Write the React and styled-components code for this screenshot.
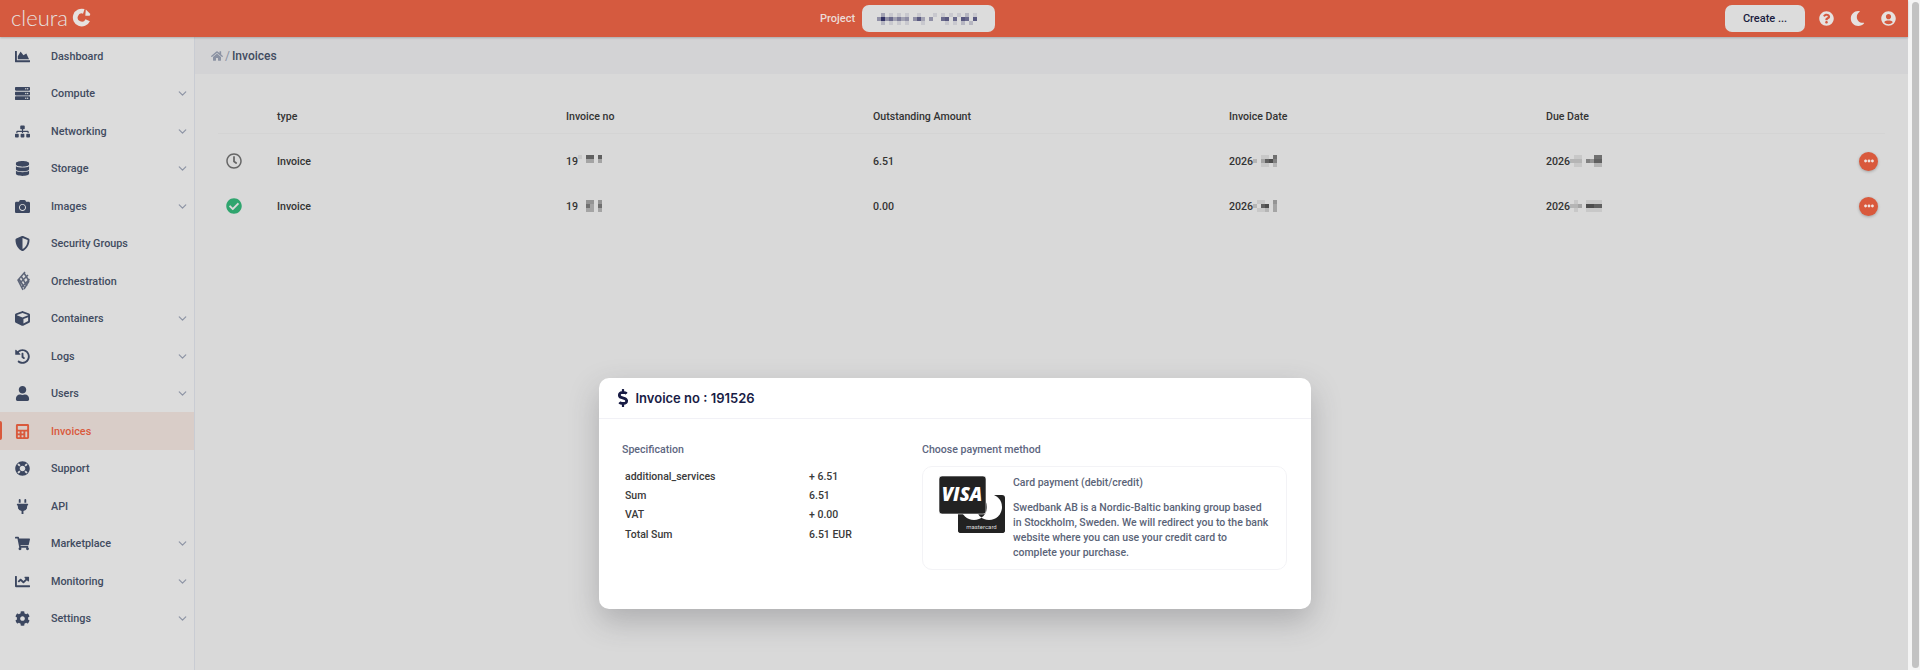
import styled, { createGlobalStyle } from 'styled-components';
import {
  FaChartArea, FaServer, FaSitemap, FaDatabase, FaCamera, FaShieldAlt, FaCube, FaHistory, FaUser,
  FaCalculator, FaLifeRing, FaPlug, FaShoppingCart, FaChartLine, FaCog, FaHome, FaQuestionCircle,
  FaMoon, FaUserCircle, FaRegClock, FaCheckCircle, FaEllipsisH, FaDollarSign,
} from 'react-icons/fa';
import { ChevronDown } from 'lucide-react';

const GlobalStyle = createGlobalStyle`
  html, body {
    margin: 0;
    height: 100%;
    overflow: hidden;
    background: #d9d9d9;
    font-family: Roboto, "Liberation Sans", sans-serif;
    -webkit-font-smoothing: antialiased;
  }
`;

const Page = styled.div`
  display: flex;
  height: 670px;
  width: 1920px;
  position: relative;
  overflow: hidden;
`;

const Content = styled.div`
  flex: 1;
  min-width: 0;
  display: flex;
  flex-direction: column;
`;

const ScrollTrack = styled.div`
  width: 12px;
  background: #f4f4f4;
  padding: 2px 1px 2px 4px;
  box-sizing: border-box;
`;

const ScrollThumb = styled.div`
  height: 100%;
  background: #c2c2c2;
  border-radius: 4px;
`;

const Header = styled.header`
  height: 37px;
  flex: none;
  background: #d55a3f;
  box-shadow: 0 1px 2px rgba(0, 0, 0, 0.2);
  display: grid;
  grid-template-columns: 809px auto 1fr;
  align-items: center;
  padding: 0 4px 0 11px;
  position: relative;
  z-index: 1;
`;

const Brand = styled.div`
  display: flex;
  align-items: center;
  gap: 4px;
  color: #e6e2e0;
  font-family: Lato, Roboto, sans-serif;
  font-weight: 300;
  font-size: 22px;
  margin-top: -2px;
`;

const ProjectBox = styled.div`
  display: flex;
  align-items: center;
  gap: 7px;
  color: #ecdcd7;
  font-size: 11px;
  font-weight: 500;
`;

const GreyPill = styled.div`
  height: 27px;
  border-radius: 7px;
  background: #dcdcdc;
  display: flex;
  align-items: center;
  justify-content: center;
`;

const ProjectPill = styled(GreyPill)`
  width: 133px;
`;

const HeaderRight = styled.div`
  display: flex;
  align-items: center;
  justify-content: flex-end;
  color: #e6e2e0;
`;

const CreateButton = styled(GreyPill)`
  width: 80px;
  color: #1a1c40;
  font-size: 11px;
  font-weight: 500;
  margin-right: 6px;
`;

const HeaderIcon = styled.span`
  width: 31px;
  display: flex;
  justify-content: center;
  font-size: 15px;
`;

const Body = styled.div`
  flex: 1;
  display: flex;
  min-height: 0;
`;

const Sidebar = styled.nav`
  width: 194px;
  flex: none;
  background: #dcdcdc;
  border-right: 1px solid #c9ccd3;
`;

const NavRow = styled.div`
  height: 37.5px;
  box-sizing: border-box;
  padding-top: 1px;
  display: flex;
  align-items: center;
  position: relative;
  font-size: 10.8px;
  font-weight: 500;
  color: ${(p) => (p.$active ? '#d9593c' : '#414b60')};
  background: ${(p) => (p.$active ? '#d9cdc8' : 'transparent')};

  &::before {
    content: '';
    display: ${(p) => (p.$active ? 'block' : 'none')};
    position: absolute;
    left: 0;
    top: 9px;
    width: 2px;
    height: 19px;
    border-radius: 0 2px 2px 0;
    background: #d9593c;
  }
`;

const NavIcon = styled.span`
  width: 45px;
  margin-right: 6px;
  flex: none;
  display: flex;
  justify-content: center;
  font-size: 15px;
  color: ${(p) => (p.$active ? '#d9593c' : '#3c4760')};
`;

const NavLabel = styled.span`
  flex: 1;
`;

const NavChevron = styled(ChevronDown)`
  width: 13px;
  height: 13px;
  margin-right: 5px;
  color: #8d94a5;
`;

const Main = styled.main`
  flex: 1;
  min-width: 0;
  background: #d9d9d9;
`;

const Breadcrumb = styled.div`
  height: 37px;
  background: #d3d3d5;
  display: flex;
  align-items: center;
  padding-left: 16px;
  color: #8b92a3;
  font-size: 12px;
  gap: 2px;
`;

const CrumbCurrent = styled.span`
  color: #414b60;
  font-weight: 500;
`;

const TableWrap = styled.div`
  padding: 24px 23px 0;
`;

const Row = styled.div`
  display: grid;
  grid-template-columns: 59px 289px 307px 356px 317px 1fr;
  align-items: center;
  height: ${(p) => (p.$head ? '36px' : '45px')};
  padding-top: ${(p) => (p.$head ? '2px' : '0')};
  font-size: 10.6px;
  font-weight: 500;
  color: #333;
  border-bottom: ${(p) => (p.$head ? '1px solid #d4d4d4' : 'none')};
  box-sizing: border-box;
  margin-bottom: ${(p) => (p.$head ? '4.5px' : '0')};
`;

const StatusCell = styled.span`
  display: flex;
  justify-content: center;
  width: 32px;
  font-size: 16px;
  color: ${(p) => (p.$paid ? '#2fa56e' : '#666')};
`;

const MaskedCell = styled.span`
  display: flex;
  align-items: center;
`;

const LastCell = styled.span`
  display: flex;
  align-items: center;
  justify-content: space-between;
`;

const DotsButton = styled.span`
  width: 19px;
  height: 19px;
  border-radius: 50%;
  background: #d9593c;
  color: #f1e4e0;
  font-size: 10px;
  display: flex;
  align-items: center;
  justify-content: center;
  box-shadow: 0 1px 3px rgba(0, 0, 0, 0.25);
  margin-right: 7px;
`;

const Modal = styled.section`
  position: absolute;
  left: 599px;
  top: 378px;
  width: 712px;
  height: 231px;
  background: #fff;
  border-radius: 10px;
  box-shadow: 0 12px 30px rgba(60, 60, 70, 0.28);
  overflow: hidden;
`;

const ModalHead = styled.div`
  height: 41px;
  box-sizing: border-box;
  border-bottom: 1px solid #f1f1f6;
  display: flex;
  align-items: center;
  gap: 3.5px;
  padding-left: 15px;
  color: #191c45;
  font-family: Inter, Roboto, sans-serif;
  font-size: 13px;
  font-weight: 600;
`;

const ModalBody = styled.div`
  display: grid;
  grid-template-columns: 300px 365px;
  padding: 24px 0 0 23px;
`;

const SectionTitle = styled.div`
  font-size: 10.6px;
  font-weight: 500;
  color: #5d667f;
  line-height: 14px;
  margin-bottom: 9px;
`;

const SpecRow = styled.div`
  display: grid;
  grid-template-columns: 184px 1fr;
  padding: 1px 0 0 3px;
  box-sizing: border-box;
  height: 19.3px;
  align-items: center;
  font-size: 10.5px;
  font-weight: 500;
  color: #3a3a3a;
`;

const PayCard = styled.div`
  height: 104px;
  box-sizing: border-box;
  border: 1px solid #f3f3f6;
  border-radius: 10px;
  display: flex;
  padding: 8px 0 0 16px;
  gap: 8px;
`;

const LogoSlot = styled.div`
  padding-top: 1px;
`;

const PayText = styled.div`
  font-size: 10.5px;
  font-weight: 500;
  color: #5b6478;
  line-height: 15px;
  width: 256px;
`;

const PayTitle = styled.div`
  margin-bottom: 10px;
`;

const NAV = [
  { label: 'Dashboard', Icon: FaChartArea },
  { label: 'Compute', Icon: FaServer, more: true },
  { label: 'Networking', Icon: FaSitemap, more: true },
  { label: 'Storage', Icon: FaDatabase, more: true },
  { label: 'Images', Icon: FaCamera, more: true },
  { label: 'Security Groups', Icon: FaShieldAlt },
  { label: 'Orchestration', Icon: OrchestrationIcon },
  { label: 'Containers', Icon: FaCube, more: true },
  { label: 'Logs', Icon: FaHistory, more: true },
  { label: 'Users', Icon: FaUser, more: true },
  { label: 'Invoices', Icon: FaCalculator, active: true },
  { label: 'Support', Icon: FaLifeRing },
  { label: 'API', Icon: FaPlug },
  { label: 'Marketplace', Icon: FaShoppingCart, more: true },
  { label: 'Monitoring', Icon: FaChartLine, more: true },
  { label: 'Settings', Icon: FaCog, more: true },
];

const SPEC = [
  ['additional_services', '+ 6.51'],
  ['Sum', '6.51'],
  ['VAT', '+ 0.00'],
  ['Total Sum', '6.51 EUR'],
];

// blanked out parts of the screenshot, one digit per cell, 0 = no paint
function Mosaic({ rows, cell = 4, tone = '60,60,60' }) {
  return (
    <svg width={rows[0].length * cell} height={rows.length * cell} shapeRendering="crispEdges">
      {rows.map((r, y) =>
        r.split('').map((d, x) =>
          d === '0' ? null : (
            <rect key={x + '-' + y} x={x * cell} y={y * cell} width={cell} height={cell} fill={`rgba(${tone},${Number(d) / 9})`} />
          )
        )
      )}
    </svg>
  );
}

function OrchestrationIcon() {
  return (
    <svg width="14" height="20" viewBox="0 0 14 20" fill="none" stroke="#5d6578" strokeWidth="1.5">
      <path d="M9 1 2 9l5 10M12 4 4 12M13.500 8 6 16M13 10l-5 8M8 2l5 8M5 5l6 10M3 8l5 8" />
    </svg>
  );
}

function CleuraMark() {
  return (
    <svg width="19" height="19" viewBox="0 0 19 19" fill="none">
      <path d="M11.800 3.400A6.500 6.500 0 1 0 15.700 12.200" stroke="#e6e2e0" strokeWidth="4.800" />
      <path d="M13.800 1.600 18.300 6l-.6 1.800h-4.400z" fill="#e6e2e0" />
    </svg>
  );
}

function CardLogos() {
  return (
    <svg width="66" height="58" viewBox="0 0 66 58">
      <rect x="19" y="19" width="47" height="38" rx="3" fill="#222" />
      <circle cx="35" cy="31" r="13" fill="#fff" />
      <circle cx="50" cy="31" r="13" fill="#fff" />
      <path d="M42.500 20.400a13 13 0 0 1 0 21.200a13 13 0 0 1 0-21.200" fill="#222" />
      <rect x="19" y="44" width="47" height="13" rx="3" fill="#222" />
      <text x="42.500" y="53" textAnchor="middle" fontFamily="Roboto, sans-serif" fontSize="6" fill="#ddd">mastercard</text>
      <rect x="0" y="0" width="47" height="38" rx="3" fill="#222" />
      <rect x="0" y="0" width="47" height="38" rx="3" fill="none" stroke="#fff" strokeWidth="0.6" />
      <text x="23" y="25" textAnchor="middle" fontFamily="'Open Sans', Roboto, sans-serif" fontStyle="italic" fontWeight="800" fontSize="18.500" fill="#fff">VISA</text>
    </svg>
  );
}

const App = () => {
  return (
    <Page>
      <GlobalStyle />
      <Content>
        <Header>
          <Brand>
            cleura
            <CleuraMark />
          </Brand>
          <ProjectBox>
            Project
            <ProjectPill>
              <Mosaic
                cell={4}
                tone="50,50,100"
                rows={[
                  '03010101001000101010102010',
                  '49463534047304006706076070',
                  '02010101000100000101020200',
                ]}
              />
            </ProjectPill>
          </ProjectBox>
          <HeaderRight>
            <CreateButton>Create ...</CreateButton>
            <HeaderIcon><FaQuestionCircle /></HeaderIcon>
            <HeaderIcon><FaMoon /></HeaderIcon>
            <HeaderIcon><FaUserCircle /></HeaderIcon>
          </HeaderRight>
        </Header>
        <Body>
          <Sidebar>
            {NAV.map(({ label, Icon, more, active }) => (
              <NavRow key={label} $active={active}>
                <NavIcon $active={active}><Icon /></NavIcon>
                <NavLabel>{label}</NavLabel>
                {more && <NavChevron strokeWidth={2.2} />}
              </NavRow>
            ))}
          </Sidebar>
          <Main>
            <Breadcrumb>
              <FaHome /> / <CrumbCurrent>Invoices</CrumbCurrent>
            </Breadcrumb>
            <TableWrap>
              <Row $head>
                <span />
                <span>type</span>
                <span>Invoice no</span>
                <span>Outstanding Amount</span>
                <span>Invoice Date</span>
                <span>Due Date</span>
              </Row>
              <Row>
                <StatusCell><FaRegClock /></StatusCell>
                <span>Invoice</span>
                <MaskedCell>19<Mosaic cell={4} rows={['1077070', '0033030', '0000000']} /></MaskedCell>
                <span>6.51</span>
                <MaskedCell>2026<Mosaic cell={4} rows={['001106', '203785', '001102']} /></MaskedCell>
                <LastCell>
                  <MaskedCell>2026<Mosaic cell={4} rows={['01100066', '22205477', '01100022']} /></MaskedCell>
                  <DotsButton><FaEllipsisH /></DotsButton>
                </LastCell>
              </Row>
              <Row>
                <StatusCell $paid><FaCheckCircle /></StatusCell>
                <span>Invoice</span>
                <MaskedCell>19<Mosaic cell={4} rows={['0044040', '0063060', '0033030']} /></MaskedCell>
                <span>0.00</span>
                <MaskedCell>2026<Mosaic cell={4} rows={['011004', '207803', '011203']} /></MaskedCell>
                <LastCell>
                  <MaskedCell>2026<Mosaic cell={4} rows={['01001111', '22308877', '01001111']} /></MaskedCell>
                  <DotsButton><FaEllipsisH /></DotsButton>
                </LastCell>
              </Row>
            </TableWrap>
          </Main>
        </Body>
      </Content>
      <ScrollTrack><ScrollThumb /></ScrollTrack>
      <Modal>
        <ModalHead>
          <FaDollarSign size={18} />
          Invoice no : 191526
        </ModalHead>
        <ModalBody>
          <div>
            <SectionTitle>Specification</SectionTitle>
            {SPEC.map(([name, value]) => (
              <SpecRow key={name}>
                <span>{name}</span>
                <span>{value}</span>
              </SpecRow>
            ))}
          </div>
          <div>
            <SectionTitle>Choose payment method</SectionTitle>
            <PayCard>
              <LogoSlot><CardLogos /></LogoSlot>
              <PayText>
                <PayTitle>Card payment (debit/credit)</PayTitle>
                Swedbank AB is a Nordic-Baltic banking group based in Stockholm, Sweden. We will redirect you to the bank website where you can use your credit card to complete your purchase.
              </PayText>
            </PayCard>
          </div>
        </ModalBody>
      </Modal>
    </Page>
  );
};

export default App;
